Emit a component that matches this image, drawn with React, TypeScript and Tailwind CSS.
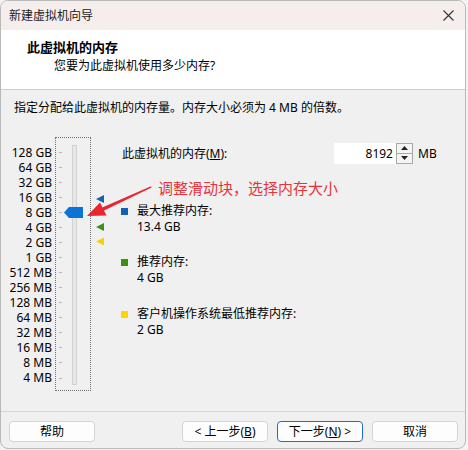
import React from "react";

const FONT = '"Noto Sans", "Noto Sans CJK SC", sans-serif';

const labels = [
  "128 GB", "64 GB", "32 GB", "16 GB", "8 GB", "4 GB", "2 GB", "1 GB",
  "512 MB", "256 MB", "128 MB", "64 MB", "32 MB", "16 MB", "8 MB", "4 MB",
];

function Slider() {
  return (
    <div className="w-[36px] h-[254px] border border-dotted border-[#707070] ml-[3px]">
      <svg width="34" height="252" viewBox="0 0 34 252">
        {labels.map((_, i) => (
          <rect key={i} x="3" y={Math.round(13.5 + i * 15.07)} width="3" height="1" fill="#b8b8b8" />
        ))}
        <rect x="16.5" y="7.5" width="4" height="239" fill="#e7e7e7" stroke="#d2d2d2" />
        <polygon points="8,74.5 13,69 27,69 27,80 13,80" fill="#0a74d6" />
      </svg>
    </div>
  );
}

function Markers() {
  return (
    <svg width="8" height="254" viewBox="0 0 8 254" className="ml-[5px]">
      <polygon points="0,62 8,58 8,66" fill="#1262b3" />
      <polygon points="0,90 8,86 8,94" fill="#3c8f17" />
      <polygon points="0,104.5 8,100.5 8,108.5" fill="#f5d200" />
    </svg>
  );
}

function Item({ color, title, value, className }: { color: string; title: string; value: string; className?: string }) {
  return (
    <div className={"flex items-start " + (className ?? "")}>
      <div className={"w-[7px] h-[7px] ml-[1px] mt-[5px] " + color} />
      <div className="ml-[9px] text-[12px] leading-[16px] text-black">
        <div>{title}</div>
        <div>{value}</div>
      </div>
    </div>
  );
}

function Btn({ children, primary }: { children: React.ReactNode; primary?: boolean }) {
  return (
    <div
      className={
        "w-[86px] h-[21px] rounded-[4px] bg-[#fdfdfd] flex items-center justify-center text-[12px] leading-[16px] text-black border " +
        (primary ? "border-[#1a6fc9]" : "border-[#d4d4d4]")
      }
    >
      {children}
    </div>
  );
}

export default function App() {
  return (
    <div className="w-[468px] h-[450px] bg-[#f3f3f3] relative" style={{ fontFamily: FONT }}>
      <div className="w-[466px] h-[449px] border border-[#b9b9b9] rounded-[8px] overflow-hidden flex flex-col bg-[#f0f0f0]">
        {/* title bar */}
        <div className="h-[29px] bg-[#f6eded] flex items-center justify-between pl-[8px] pr-[11px]">
          <span className="text-[12px] leading-[16px] text-[#1b1b1b]">新建虚拟机向导</span>
          <svg width="11" height="11" viewBox="0 0 11 11">
            <path d="M0.5 0.5 L10.5 10.5 M10.5 0.5 L0.5 10.5" stroke="#333" strokeWidth="1.1" />
          </svg>
        </div>
        {/* header */}
        <div className="h-[60px] bg-white border-b border-[#cfcfcf] pt-[8px]">
          <div className="pl-[26px] text-[13px] leading-[18px] font-bold text-black">此虚拟机的内存</div>
          <div className="pl-[53px] mt-[2px] text-[12px] leading-[16px] text-black">您要为此虚拟机使用多少内存?</div>
        </div>
        {/* body */}
        <div className="h-[321px] pt-[10px]">
          <div className="pl-[13px] text-[12px] leading-[16px] text-black">
            指定分配给此虚拟机的内存量。内存大小必须为 4 MB 的倍数。
          </div>
          <div className="flex items-start mt-[21px]">
            <div className="w-[51px] mt-[7.5px] flex flex-col">
              {labels.map((l) => (
                <div key={l} className="h-[15.07px] flex items-center justify-end text-[12px] leading-[13px] text-black whitespace-nowrap">
                  {l}
                </div>
              ))}
            </div>
            <Slider />
            <Markers />
            <div className="ml-[16px] flex flex-col">
              <div className="mt-[6px] h-[21px] flex items-center">
                <div className="w-[214px] pl-[2px] text-[12px] leading-[16px] text-black">
                  此虚拟机的内存(<span className="underline">M</span>):
                </div>
                <div className="w-[62px] h-[21px] bg-white flex items-center justify-end pr-[3px] text-[12px] leading-[16px] text-black">
                  8192
                </div>
                <div className="w-[17px] h-[21px] flex flex-col">
                  <div className="h-[10.5px] border border-[#a9a9a9] bg-[#f4f4f4] flex items-center justify-center">
                    <svg width="7" height="4" viewBox="0 0 7 4"><polygon points="3.5,0 7,4 0,4" fill="#222" /></svg>
                  </div>
                  <div className="h-[10.5px] border border-t-0 border-[#a9a9a9] bg-[#f4f4f4] flex items-center justify-center">
                    <svg width="7" height="4" viewBox="0 0 7 4"><polygon points="0,0 7,0 3.5,4" fill="#222" /></svg>
                  </div>
                </div>
                <div className="ml-[5px] text-[12px] leading-[16px] text-black">MB</div>
              </div>
              <Item className="mt-[39px]" color="bg-[#0f62b0]" title="最大推荐内存:" value="13.4 GB" />
              <Item className="mt-[19px]" color="bg-[#3d8f12]" title="推荐内存:" value="4 GB" />
              <Item className="mt-[20px]" color="bg-[#ffd500]" title="客户机操作系统最低推荐内存:" value="2 GB" />
            </div>
          </div>
        </div>
        {/* footer */}
        <div className="flex-1 border-t border-[#d6d6d6] pt-[9px] pl-[8px] pr-[7px] flex justify-between">
          <Btn>帮助</Btn>
          <div className="flex gap-[9px]">
            <Btn>&lt; 上一步(<span className="underline">B</span>)</Btn>
            <Btn primary>下一步(<span className="underline">N</span>) &gt;</Btn>
            <Btn>取消</Btn>
          </div>
        </div>
      </div>

      {/* annotation overlay */}
      <div className="absolute left-[158px] top-[178px] text-[15px] leading-[20px] text-[#e8323c] whitespace-nowrap">
        调整滑动块，选择内存大小
      </div>
      <svg className="absolute left-0 top-0 pointer-events-none" width="468" height="450" viewBox="0 0 468 450">
        <polygon points="151,186.3 151.6,187.6 103.6,210.7 102.2,207.6" fill="#e8262f" />
        <polygon points="87,216 100,202.5 106.5,215.5" fill="#e8262f" />
      </svg>
    </div>
  );
}
